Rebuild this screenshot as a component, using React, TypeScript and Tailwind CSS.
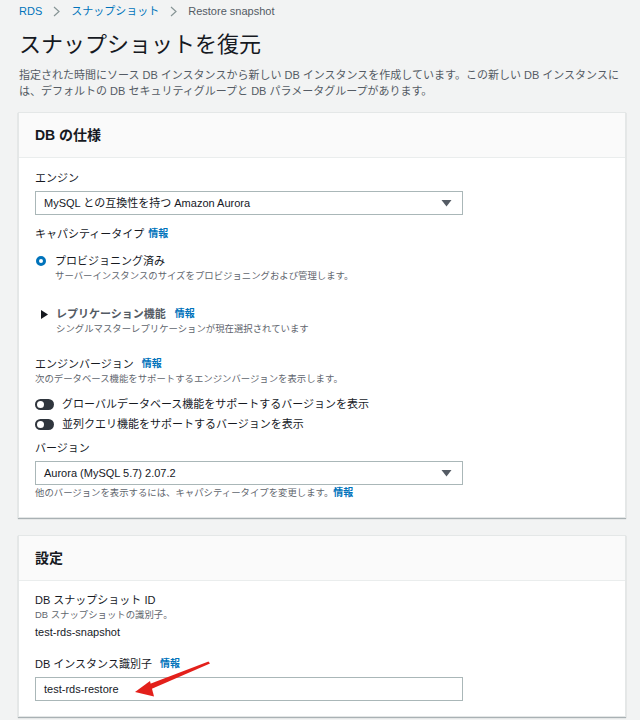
import React from "react";

const font = { fontFamily: '"Liberation Sans", "Noto Sans CJK JP", sans-serif' };

function Info({ ml }: { ml: string }) {
  return <span className={`${ml} text-[10px] font-bold leading-[14px] text-[#0073bb]`}>情報</span>;
}

function Select({ value }: { value: string }) {
  return (
    <div className="flex h-[24px] w-[428px] items-center justify-between border border-[#aab7b8] bg-white pl-[8px] pr-[10px]">
      <span className="text-[11px] leading-[16px] text-[#16191f]">{value}</span>
      <svg width="11" height="8" viewBox="0 0 11 8">
        <path d="M0.5 1 L10.5 1 L5.5 7.5 Z" fill="#545b64" />
      </svg>
    </div>
  );
}

function Toggle({ label }: { label: string }) {
  return (
    <div className="flex h-[20px] items-center">
      <div className="flex h-[11px] w-[19px] items-center rounded-full bg-[#2f353d] pl-[2px]">
        <div className="h-[7px] w-[7px] rounded-full bg-white" />
      </div>
      <span className="ml-[8px] text-[11px] leading-[16px] text-[#16191f]">{label}</span>
    </div>
  );
}

function Card({ title, children }: { title: string; children: React.ReactNode }) {
  return (
    <div className="border border-[#e4e7e7] bg-white shadow-[0_1px_1px_0_rgba(0,28,36,0.3)]">
      <div className="border-b border-[#eaeded] bg-[#fafafa] px-[16px] py-[12px]">
        <h2 className="text-[14px] font-bold leading-[20px] text-[#16191f]">{title}</h2>
      </div>
      {children}
    </div>
  );
}

function Chevron() {
  return (
    <svg className="mx-[11px]" width="7" height="11" viewBox="0 0 7 11">
      <path d="M1 1 L6 5.5 L1 10" fill="none" stroke="#879596" strokeWidth="1.2" />
    </svg>
  );
}

export default function App() {
  return (
    <div className="relative min-h-[720px] w-[640px] bg-[#f2f3f3] pl-[18px] pr-[14px]" style={font}>
      <div className="flex items-center pl-[1px] pt-[3px] text-[11px] leading-[16px]">
        <span className="text-[#0073bb]">RDS</span>
        <Chevron />
        <span className="text-[#0073bb]">スナップショット</span>
        <Chevron />
        <span className="text-[#545b64]">Restore snapshot</span>
      </div>
      <h1 className="mt-[12px] pl-[1px] text-[22px] font-normal leading-[28px] text-[#16191f]">スナップショットを復元</h1>
      <p className="mt-[8px] whitespace-nowrap pl-[1px] text-[11px] leading-[16px] text-[#545b64]">
        指定された時間にソース DB インスタンスから新しい DB インスタンスを作成しています。この新しい DB インスタンスに
        <br />
        は、デフォルトの DB セキュリティグループと DB パラメータグループがあります。
      </p>

      <div className="mt-[13px]">
        <Card title="DB の仕様">
          <div className="px-[16px] pb-[17px] pt-[12px]">
            <div className="text-[11px] leading-[16px] text-[#16191f]">エンジン</div>
            <div className="mt-[5px]"><Select value="MySQL との互換性を持つ Amazon Aurora" /></div>
            <div className="mt-[11px] flex items-center text-[11px] leading-[16px] text-[#16191f]">キャパシティータイプ<Info ml="ml-[4px]" /></div>
            <div className="mt-[11px] flex">
              <div className="ml-[1px] mt-[3px] h-[10px] w-[10px] shrink-0 rounded-full border-[3px] border-[#0073bb] bg-white" />
              <div className="ml-[9px]">
                <div className="text-[11px] leading-[16px] text-[#16191f]">プロビジョニング済み</div>
                <div className="text-[9.4px] leading-[14px] text-[#5f666e]">サーバーインスタンスのサイズをプロビジョニングおよび管理します。</div>
              </div>
            </div>
            <div className="mt-[23px] flex">
              <svg className="ml-[6px] mt-[4px] shrink-0" width="7" height="9" viewBox="0 0 7 9"><path d="M0 0 L7 4.5 L0 9 Z" fill="#16191f" /></svg>
              <div className="ml-[8px]">
                <div className="flex items-center text-[11px] font-bold leading-[16px] text-[#545b64]">レプリケーション機能<Info ml="ml-[9px]" /></div>
                <div className="text-[9.4px] leading-[14px] text-[#5f666e]">シングルマスターレプリケーションが現在選択されています</div>
              </div>
            </div>
            <div className="mt-[20px] flex items-center text-[11px] leading-[16px] text-[#16191f]">エンジンバージョン<Info ml="ml-[8px]" /></div>
            <div className="text-[9.4px] leading-[14px] text-[#5f666e]">次のデータベース機能をサポートするエンジンバージョンを表示します。</div>
            <div className="mt-[8px]">
              <Toggle label="グローバルデータベース機能をサポートするバージョンを表示" />
              <Toggle label="並列クエリ機能をサポートするバージョンを表示" />
            </div>
            <div className="mt-[6px] text-[11px] leading-[16px] text-[#16191f]">バージョン</div>
            <div className="mt-[5px]"><Select value="Aurora (MySQL 5.7) 2.07.2" /></div>
            <div className="mt-[1px] flex items-center text-[9.4px] leading-[14px] text-[#5f666e]">他のバージョンを表示するには、キャパシティータイプを変更します。<Info ml="ml-[0px]" /></div>
          </div>
        </Card>
      </div>

      <div className="mt-[17px]">
        <Card title="設定">
          <div className="px-[16px] pb-[15px] pt-[11px]">
            <div className="text-[11px] leading-[16px] text-[#16191f]">DB スナップショット ID</div>
            <div className="text-[9.4px] leading-[14px] text-[#5f666e]">DB スナップショットの識別子。</div>
            <div className="mt-[2px] text-[11px] leading-[16px] text-[#16191f]">test-rds-snapshot</div>
            <div className="mt-[16px] flex items-center text-[11px] leading-[16px] text-[#16191f]">DB インスタンス識別子<Info ml="ml-[8px]" /></div>
            <div className="mt-[5px] flex h-[24px] w-[428px] items-center border border-[#aab7b8] bg-white pl-[8px]">
              <span className="text-[11px] leading-[16px] text-[#16191f]">test-rds-restore</span>
            </div>
          </div>
        </Card>
      </div>

      <svg className="pointer-events-none absolute left-0 top-0" width="640" height="720" viewBox="0 0 640 720">
        <path d="M208.5 661.5 L147 685 L149 690 L210 663.5 Z" fill="#e3201b" />
        <path d="M135 692 L150 681 L154 696.5 Z" fill="#e3201b" />
      </svg>
    </div>
  );
}
